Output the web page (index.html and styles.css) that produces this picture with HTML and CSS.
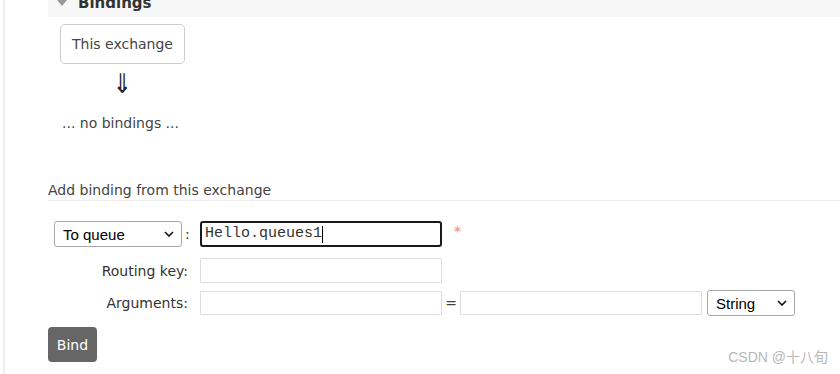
FILE: index.html
```html
<!DOCTYPE html>
<html>
<head>
<meta charset="utf-8">
<link rel="stylesheet" href="styles.css">
</head>
<body>
<div class="page">
  <div class="section-head">
    <span class="tri"></span>
    <h2 class="section-title">Bindings</h2>
  </div>
  <div class="diagram">
    <div class="exchange-box">This exchange</div>
    <div class="arrow">⇓</div>
  </div>
  <p class="none">... no bindings ...</p>
  <h3 class="sub">Add binding from this exchange</h3>
  <div class="form">
    <div class="row row1">
      <div class="lbl lbl-select">
        <div class="select sel-queue"><span>To queue</span><svg class="chev" viewBox="0 0 10 6" width="10" height="6"><path d="M1 1 L5 5 L9 1" fill="none" stroke="#111" stroke-width="1.6"/></svg></div>
        <span class="colon">:</span>
      </div>
      <div class="input focused">Hello.queues1<span class="caret"></span></div>
      <span class="req">*</span>
    </div>
    <div class="row row2">
      <div class="lbl">Routing key:</div>
      <div class="input"></div>
    </div>
    <div class="row row3">
      <div class="lbl">Arguments:</div>
      <div class="input"></div>
      <span class="eq">=</span>
      <div class="input"></div>
      <div class="select sel-type"><span>String</span><svg class="chev" viewBox="0 0 10 6" width="10" height="6"><path d="M1 1 L5 5 L9 1" fill="none" stroke="#111" stroke-width="1.6"/></svg></div>
    </div>
    <button class="bind">Bind</button>
  </div>
  <div class="watermark">CSDN @十八旬</div>
</div>
</body>
</html>
```

FILE: styles.css
```css
html, body {
  margin: 0;
  padding: 0;
  background: #fff;
}
body {
  font-family: "DejaVu Sans", Verdana, sans-serif;
  color: #484848;
  width: 840px;
  height: 374px;
  overflow: hidden;
}
.page {
  position: relative;
  margin-left: 3px;
  border-left: 2px solid #ededed;
  height: 374px;
  padding-left: 43px;
  box-sizing: border-box;
}
.section-head {
  height: 17px;
  background: #f7f7f7;
  overflow: hidden;
  display: flex;
  align-items: flex-start;
}
.tri {
  width: 0;
  height: 0;
  margin-left: 9px;
  border-left: 5px solid transparent;
  border-right: 5px solid transparent;
  border-top: 6px solid #999;
}
.section-title {
  margin: -7px 0 0 11px;
  font-size: 15px;
  line-height: 20px;
  font-weight: bold;
  color: #333;
}
.diagram {
  width: 125px;
  margin: 7px 0 0 12px;
  display: flex;
  flex-direction: column;
  align-items: center;
}
.exchange-box {
  width: 125px;
  height: 40px;
  box-sizing: border-box;
  border: 1px solid #ccc;
  border-radius: 5px;
  display: flex;
  align-items: center;
  justify-content: center;
  font-size: 14px;
  color: #444;
}
.arrow {
  font-size: 27px;
  line-height: 28px;
  margin-top: 6px;
  color: #222;
  font-family: "DejaVu Sans", sans-serif;
  transform: scaleX(0.85);
}
.none {
  margin: 17px 0 0 14px;
  font-size: 14px;
  line-height: 16px;
  color: #444;
}
.sub {
  margin: 50px 0 0 0;
  font-size: 14px;
  font-weight: normal;
  color: #444;
  line-height: 18px;
  padding-bottom: 1px;
  border-bottom: 1px solid #eee;
}
.form {
  margin-top: 20px;
}
.row {
  display: flex;
  align-items: center;
}
.row2 { margin-top: 11px; }
.row3 { margin-top: 7px; }
.lbl {
  width: 152px;
  flex: none;
  box-sizing: border-box;
  padding-right: 12px;
  text-align: right;
  font-size: 14px;
  color: #333;
}
.lbl-select {
  display: flex;
  align-items: center;
  padding: 0 0 0 6px;
  text-align: left;
}
.colon {
  margin-left: 3px;
  font-size: 14px;
  color: #333;
}
.select {
  box-sizing: border-box;
  border: 1px solid #a8a8a8;
  border-radius: 3px;
  height: 26px;
  display: flex;
  align-items: center;
  justify-content: space-between;
  padding: 0 7px 0 8px;
  font-family: "Liberation Sans", Arial, sans-serif;
  font-size: 15px;
  color: #000;
  background: #fff;
}
.sel-queue { width: 128px; }
.sel-type { width: 88px; margin-left: 5px; }
.input {
  box-sizing: border-box;
  width: 242px;
  height: 25px;
  border: 1px solid #ddd;
  border-radius: 1px;
  background: #fff;
  flex: none;
}
.row3 .input { height: 24px; }
.input.focused {
  height: 26px;
  border: 2px solid #1a1a1a;
  border-radius: 3px;
  font-family: "Liberation Mono", "Courier New", monospace;
  font-size: 15px;
  color: #333;
  padding-left: 3px;
  line-height: 22px;
  display: flex;
  align-items: center;
}
.caret {
  display: inline-block;
  width: 1px;
  height: 17px;
  background: #000;
}
.req {
  margin-left: 12px;
  color: #f77;
  font-size: 14px;
  align-self: flex-start;
  margin-top: 2px;
}
.eq {
  width: 18px;
  text-align: center;
  font-size: 14px;
  color: #444;
}
.bind {
  display: block;
  margin-top: 11px;
  width: 49px;
  height: 35px;
  border: none;
  border-radius: 4px;
  background: #666;
  color: #fff;
  font-family: "DejaVu Sans", Verdana, sans-serif;
  font-size: 14px;
  padding: 0;
}
.watermark {
  position: absolute;
  right: 12px;
  bottom: 8px;
  font-family: "Liberation Sans", "Noto Sans CJK SC", sans-serif;
  font-size: 14px;
  color: #b8b8b8;
}
```
